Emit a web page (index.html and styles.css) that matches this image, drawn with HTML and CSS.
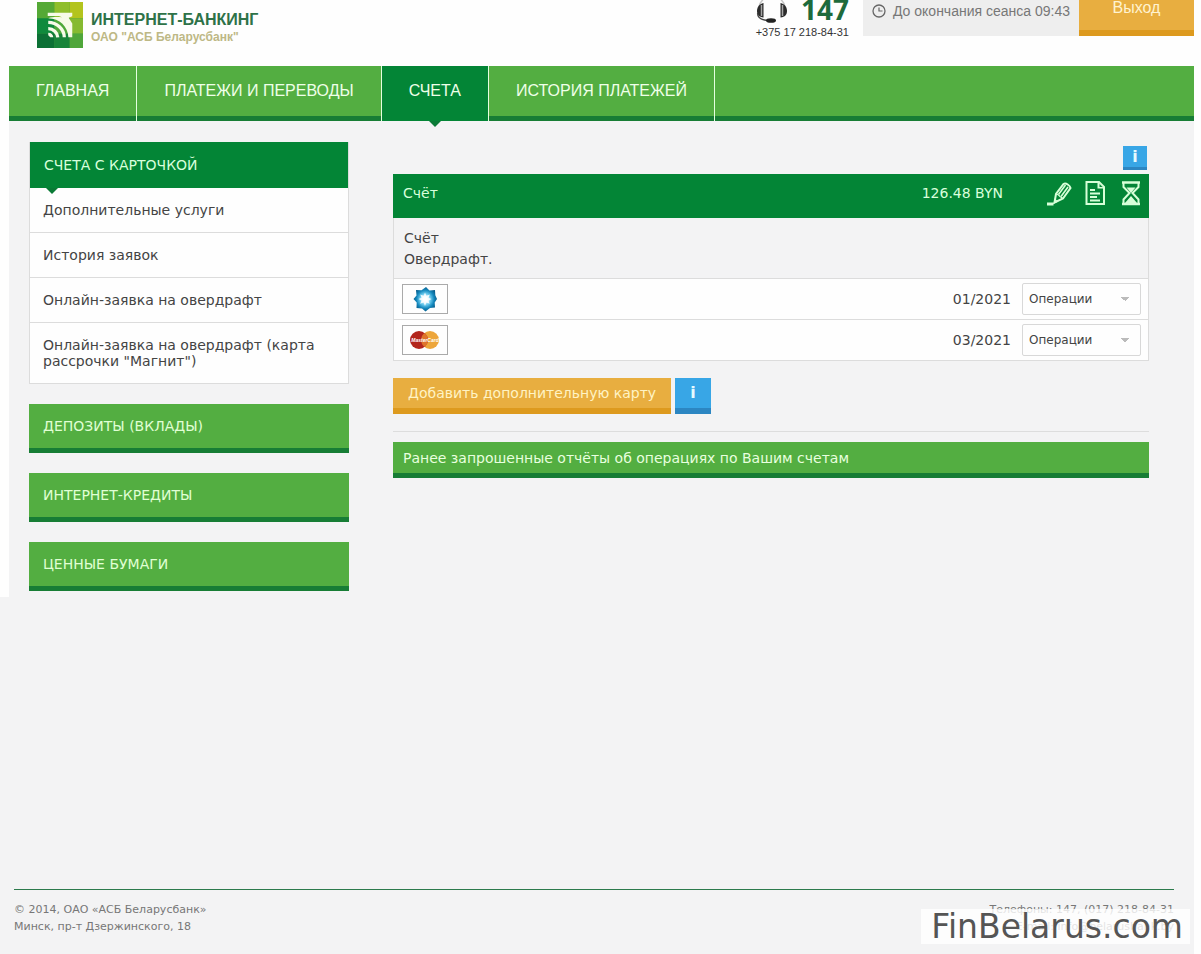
FILE: index.html
```html
<!DOCTYPE html>
<html lang="ru">
<head>
<meta charset="utf-8">
<title>Интернет-банкинг</title>
<link rel="stylesheet" href="styles.css">
</head>
<body>
<div class="page">
  <header class="header">
    <a class="brand" href="#">
      <svg class="brand-logo" viewBox="0 0 45 45" aria-hidden="true">
        <rect width="45" height="45" fill="#3a9a3c"/>
        <rect width="17" height="16" fill="#55a936"/>
        <rect x="17" width="15" height="16" fill="#8fbe2c"/>
        <rect x="32" width="13" height="16" fill="#b3c41d"/>
        <rect y="16" width="17" height="15" fill="#0f8a3c"/>
        <rect x="17" y="16" width="15" height="15" fill="#4fa83a"/>
        <rect x="32" y="16" width="13" height="15" fill="#86ba30"/>
        <rect y="31" width="17" height="14" fill="#0c7035"/>
        <rect x="17" y="31" width="15" height="14" fill="#18843a"/>
        <rect x="32" y="31" width="13" height="14" fill="#4fa63a"/>
        <path d="M10.500 10.500H34.500v3.500l-3.500 1.500L34.500 21v13.500h-3.800C30.500 24 22 16 11 15.800c4-1.300 9-1.300 13.500-.8l-3-1.200h-11z" fill="#f7fbe8"/>
        <path d="M11 20c8.500 0 15.500 6.500 15.700 14.500M11 26c5 0 9 4 9.300 8.500" fill="none" stroke="#f7fbe8" stroke-width="3.200"/>
        <path d="M11 30c3 0 4.700 2 5 4.500h-3l-2-2z" fill="#f7fbe8"/>
      </svg>
      <span class="brand-text">
        <span class="brand-name">ИНТЕРНЕТ-БАНКИНГ</span>
        <span class="brand-owner">ОАО "АСБ Беларусбанк"</span>
      </span>
    </a>
    <div class="support">
      <div class="support-main">
        <svg class="headset" viewBox="0 0 32 24" aria-hidden="true">
          <path d="M3 7C4 3 5 1 7 0M29 7C28 3 27 1 25 0" fill="none" stroke="#c4c4c4" stroke-width="1.500"/>
          <path d="M7.500 3v14.500C3 17 1 14.500 1 11s2-7 6.500-8z" fill="#2b2b2b"/>
          <path d="M24.500 3v14.500C29 17 31 14.500 31 11s-2-7-6.500-8z" fill="#2b2b2b"/>
          <path d="M5.500 5v11M26.500 5v11" stroke="#a5a5a5" stroke-width="1.500"/>
          <path d="M1.500 13c0 5 4 7 10 7.500" fill="none" stroke="#444" stroke-width="1.300"/>
          <ellipse cx="15" cy="20.500" rx="5" ry="2.300" fill="#222"/>
        </svg>
        <strong class="support-number">147</strong>
      </div>
      <span class="support-phone">+375 17 218-84-31</span>
    </div>
    <div class="session">
      <svg class="clock" viewBox="0 0 14 14" aria-hidden="true"><circle cx="7" cy="7" r="6" fill="none" stroke="#666" stroke-width="1.300"/><path d="M7 3.500V7h3.500" fill="none" stroke="#666" stroke-width="1.200"/></svg>
      <span>До окончания сеанса 09:43</span>
    </div>
    <button class="logout" type="button">Выход</button>
  </header>

  <nav class="nav">
    <a class="nav-item" href="#">ГЛАВНАЯ</a>
    <a class="nav-item" href="#">ПЛАТЕЖИ И ПЕРЕВОДЫ</a>
    <a class="nav-item nav-item-active" href="#">СЧЕТА</a>
    <a class="nav-item" href="#">ИСТОРИЯ ПЛАТЕЖЕЙ</a>
  </nav>

  <div class="content">
    <aside class="sidebar">
      <section class="menu">
        <a class="menu-title" href="#">СЧЕТА С КАРТОЧКОЙ</a>
        <a class="menu-link" href="#">Дополнительные услуги</a>
        <a class="menu-link" href="#">История заявок</a>
        <a class="menu-link" href="#">Онлайн-заявка на овердрафт</a>
        <a class="menu-link" href="#">Онлайн-заявка на овердрафт (карта рассрочки "Магнит")</a>
      </section>
      <a class="side-button" href="#">ДЕПОЗИТЫ (ВКЛАДЫ)</a>
      <a class="side-button" href="#">ИНТЕРНЕТ-КРЕДИТЫ</a>
      <a class="side-button" href="#">ЦЕННЫЕ БУМАГИ</a>
    </aside>

    <main class="main">
      <button class="info info-small" type="button">i</button>
      <section class="account">
        <div class="account-head">
          <span class="account-title">Счёт</span>
          <span class="account-sum">126.48 BYN</span>
          <span class="account-tools">
            <button class="tool" type="button" aria-label="Изменить">
              <svg viewBox="0 0 26 26"><path d="M8.500 22.500L10 14l7.500-10c2.500-1.500 6.500 1.500 7 4L17 18.500z" fill="none" stroke="#d8ffd8" stroke-width="2"/><path d="M12.500 14.500l7-9.500M15 16.500l7-9.500" stroke="#d8ffd8" stroke-width="1.600"/><path d="M10 14l2.500 1 1.500 1.500 3 2" fill="none" stroke="#d8ffd8" stroke-width="1.300"/><path d="M7.500 24l1-5.500 4 3zM1 22.500h6.500v3H1z" fill="#d8ffd8"/></svg>
            </button>
            <button class="tool" type="button" aria-label="Отчёт">
              <svg viewBox="0 0 26 26"><path d="M4.500 2H17l5 5v17H4.500z" fill="none" stroke="#d8ffd8" stroke-width="2"/><path d="M15.500 2v6.500H22L16 2z" fill="#d8ffd8"/><path d="M17.500 4v3h3z" fill="#038536"/><path d="M8 10h5M8 13.500h10M8 17h7M8 20.500h10" stroke="#d8ffd8" stroke-width="1.800"/></svg>
            </button>
            <button class="tool" type="button" aria-label="История">
              <svg viewBox="0 0 26 26"><path d="M4 2.500h18M4 24h18" stroke="#d8ffd8" stroke-width="2.500"/><path d="M5.500 3v4l6 6-6 6.500V24M20.500 3v4l-6 6 6 6.500V24" fill="none" stroke="#d8ffd8" stroke-width="2"/><path d="M8.500 7.500h9L13 13zM7 23l6-7 6 7z" fill="#d8ffd8"/></svg>
            </button>
          </span>
        </div>
        <div class="account-info">
          <span>Счёт</span>
          <span>Овердрафт.</span>
        </div>
        <div class="card-row">
          <span class="card-logo">
            <svg viewBox="0 0 44 28" role="img" aria-label="Белкарт">
              <defs><radialGradient id="star"><stop offset="0.150" stop-color="#fff"/><stop offset="0.450" stop-color="#6ccbee"/><stop offset="0.750" stop-color="#1488bd"/><stop offset="1" stop-color="#09608f"/></radialGradient></defs>
              <path d="M23 2l3.500 3.500L32 5l.3 5.200L34 14l-2.300 3.500.3 5-5 .5-4.500 3.500-3.500-3-5.500-.5.200-5.500L10.500 14l3-3.500-.5-5.500 5.500.3z" fill="url(#star)"/>
              <path d="M22 7.500l1.400 3.200 3.500-1.300-1.400 3.300 3 1.400-3 1.600 1.200 3.100-3.300-1.200L22 21l-1.400-3.400-3.500 1.200 1.500-3.200-3.200-1.500 3.200-1.400-1.400-3.300 3.400 1.300z" fill="#fff" fill-opacity="0.850"/>
            </svg>
          </span>
          <span class="card-date">01/2021</span>
          <select class="operations" aria-label="Операции по карте 01/2021"><option>Операции</option></select>
        </div>
        <div class="card-row">
          <span class="card-logo">
            <svg viewBox="0 0 44 28" role="img" aria-label="MasterCard">
              <circle cx="27" cy="14" r="9" fill="#eda63a"/><circle cx="16" cy="14" r="9" fill="#b3261d"/>
              <path d="M21.500 7a9 9 0 0 1 0 14a9 9 0 0 1 0-14z" fill="#df742b"/>
              <text class="mc-text" x="22" y="16" text-anchor="middle">MasterCard</text>
            </svg>
          </span>
          <span class="card-date">03/2021</span>
          <select class="operations" aria-label="Операции по карте 03/2021"><option>Операции</option></select>
        </div>
      </section>
      <div class="actions">
        <button class="add-card" type="button">Добавить дополнительную карту</button>
        <button class="info" type="button">i</button>
      </div>
      <a class="reports" href="#">Ранее запрошенные отчёты об операциях по Вашим счетам</a>
    </main>
  </div>

  <footer class="footer">
    <div>© 2014, ОАО «АСБ Беларусбанк»<br>Минск, пр-т Дзержинского, 18</div>
    <div class="contacts">Телефоны: 147, (017) 218-84-31<br>E-mail: info@belarusbank.by</div>
    <div class="watermark">FinBelarus.com</div>
  </footer>
</div>
</body>
</html>
```
FILE: styles.css
```css
* { box-sizing: border-box; }

body {
  margin: 0;
  background: linear-gradient(#fefefe, #fefefe) 0 0 / 9px 597px no-repeat,
    linear-gradient(#fefefe, #fefefe) 100% 0 / 7px 100% no-repeat, #f3f3f4;
  color: #444;
  font: 14px/16px "DejaVu Sans", Verdana, sans-serif;
}

a { color: inherit; text-decoration: none; }
button { border: 0; border-radius: 0; padding: 0; font: inherit; cursor: pointer; }

.page {
  display: flex;
  flex-direction: column;
  min-height: 100vh;
  margin-right: 7px;
}

.header {
  display: flex;
  align-items: flex-start;
  height: 66px;
  padding-left: 37px;
  background: #fefefe;
  font-family: "Liberation Sans", Arial, sans-serif;
}

.brand { display: flex; gap: 8px; margin-right: auto; padding-top: 2px; }
.brand-logo { width: 46px; height: 46px; }
.brand-text { display: flex; flex-direction: column; padding-top: 9px; }
.brand-name { color: #2e7248; font-size: 16px; line-height: 18px; font-weight: bold; }
.brand-owner { color: #bdb885; font-size: 12px; line-height: 16px; font-weight: bold; }

.support { display: flex; flex-direction: column; margin-right: 14px; }
.support-main { display: flex; justify-content: space-between; height: 24px; }
.headset { width: 32px; height: 24px; }
.support-number {
  margin-top: -6px;
  color: #1d6a3c;
  font: bold 28px/30px "Open Sans", sans-serif;
}
.support-phone { color: #333; font-size: 11px; line-height: 16px; }

.session {
  display: flex;
  align-items: center;
  gap: 7px;
  height: 36px;
  padding: 0 9px 14px;
  background: #eee;
  color: #777;
  font-size: 14px;
}
.clock { width: 14px; height: 14px; }

.logout {
  width: 115px;
  height: 36px;
  padding-bottom: 14px;
  border-bottom: 6px solid #dd9a1e;
  background: #e8ae40;
  color: #fff3d0;
  font-size: 16px;
}

.nav {
  display: flex;
  height: 55px;
  margin-left: 9px;
  border-bottom: 5px solid #177d35;
  background: #53ae41;
}
.nav-item {
  position: relative;
  height: 55px;
  padding: 0 27px;
  border-right: 1px solid #e4ffe0;
  color: #efffe8;
  font: 16px/49px "Liberation Sans", Arial, sans-serif;
}
.nav-item-active { background: #038536; }
.nav-item-active::after, .menu-title::after {
  position: absolute;
  top: 100%;
  border: 6px solid transparent;
  border-top-color: #0a7a36;
  border-bottom: 0;
  content: "";
}
.nav-item-active::after { left: calc(50% - 6px); }

.content { display: flex; gap: 44px; margin: 21px 45px 0 29px; }

.sidebar { display: flex; flex: 0 0 320px; flex-direction: column; gap: 20px; }
.menu { border: 1px solid #dcdcdc; border-top: 0; background: #fefefe; }
.menu-title {
  display: block;
  position: relative;
  padding: 15px 14px;
  background: #038536;
  color: #d9ffdc;
}
.menu-title::after { left: 16px; }
.menu-link { display: block; padding: 14px 13px; border-bottom: 1px solid #dcdcdc; }
.menu-link:last-child { border-bottom: 0; }
.side-button {
  padding: 14px;
  border-bottom: 5px solid #177d35;
  background: #53ae41;
  color: #e0ffd4;
}

.main { display: flex; flex: 1; flex-direction: column; min-width: 0; padding-top: 4px; }
.info {
  width: 36px;
  height: 36px;
  border-bottom: 6px solid #2c86c2;
  background: #38a6e6;
  color: #e8faff;
  font-weight: bold;
  font-size: 16px;
}
.info-small {
  align-self: flex-end;
  width: 24px;
  height: 24px;
  margin: 0 2px 4px 0;
  border-bottom-width: 3px;
}

.account { border: 1px solid #dcdcdc; border-top: 0; }
.account-head {
  display: flex;
  align-items: center;
  height: 44px;
  margin: 0 -1px;
  padding: 0 5px 6px 10px;
  background: #038536;
  color: #d9ffdc;
}
.account-sum { margin-left: auto; }
.account-tools { display: flex; gap: 10px; margin-left: 43px; }
.tool { width: 26px; height: 26px; background: none; }
.tool svg { display: block; }
.account-info { display: flex; flex-direction: column; gap: 5px; padding: 12px 10px 11px; }
.card-row {
  display: flex;
  align-items: center;
  height: 41px;
  padding: 0 7px 0 8px;
  border-top: 1px solid #dcdcdc;
  background: #fefefe;
}
.card-logo { width: 46px; height: 30px; border: 1px solid #aaa; }
.card-logo svg { display: block; }
.mc-text { fill: #fff; font: italic bold 5px "Liberation Sans", sans-serif; }
.card-date { margin-left: auto; }
.operations {
  width: 119px;
  height: 32px;
  margin-left: 11px;
  padding: 0 6px;
  border: 1px solid #d8d8d8;
  border-radius: 2px;
  appearance: none;
  background: conic-gradient(from -45deg at 50% 100%, #bbb 90deg, transparent 0) right 11px center / 8px 4px no-repeat, #fefefe;
  color: #444;
  font: 12px "DejaVu Sans", Verdana, sans-serif;
}

.actions { display: flex; gap: 4px; padding: 17px 0; border-bottom: 1px solid #ddd; }
.add-card {
  height: 36px;
  padding: 0 15px;
  border-bottom: 6px solid #dd9a1e;
  background: #e8ae40;
  color: #fff3c4;
}
.reports {
  margin-top: 10px;
  padding: 8px 10px 7px;
  border-bottom: 5px solid #177d35;
  background: #53ae41;
  color: #e8ffdf;
}

.footer {
  display: flex;
  position: relative;
  justify-content: space-between;
  margin: auto 20px 0 14px;
  padding: 11px 0 19px;
  border-top: 1px solid #2c7a4c;
  color: #777;
  font-size: 11px;
  line-height: 17px;
}
.contacts { text-align: right; }
.watermark {
  position: absolute;
  right: -16px;
  bottom: 10px;
  padding: 0 7px 0 10px;
  background: rgba(255, 255, 255, 0.8);
  color: #555;
  font-size: 33px;
  line-height: 35px;
}
```
